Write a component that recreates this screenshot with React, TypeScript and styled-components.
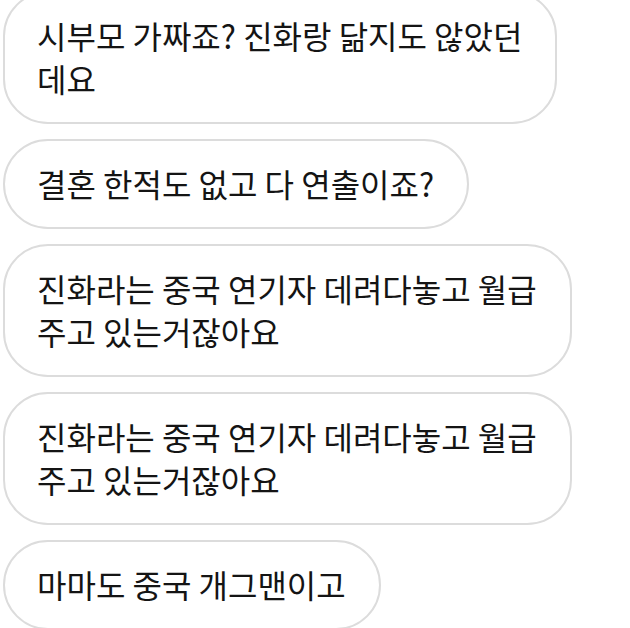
import React from 'react';
import styled, { createGlobalStyle } from 'styled-components';

const GlobalStyle = createGlobalStyle`
    html, body {
        margin: 0;
        padding: 0;
        background: #ffffff;
        overflow: hidden;
    }
`;

const Thread = styled.div`
    display: flex;
    flex-direction: column;
    align-items: flex-start;
    gap: 15px;
    margin-top: -9px;
    padding-left: 3px;
    width: 630px;
    height: 637px;
    overflow: hidden;
`;

const Bubble = styled.div`
    width: fit-content;
    box-sizing: border-box;
    padding: 21px 33px 22px 32px;
    border: 2px solid #dcdcdc;
    border-radius: 45px;
    background: #ffffff;
    color: #141414;
    font-family: 'Noto Sans CJK KR', 'Noto Sans', sans-serif;
    font-size: 32px;
    line-height: 43px;
    white-space: nowrap;
`;

const Line = styled.div`
    display: block;
`;

const messages: string[][] = [
    ['시부모 가짜죠? 진화랑 닮지도 않았던', '데요'],
    ['결혼 한적도 없고 다 연출이죠?'],
    ['진화라는 중국 연기자 데려다놓고 월급', '주고 있는거잖아요'],
    ['진화라는 중국 연기자 데려다놓고 월급', '주고 있는거잖아요'],
    ['마마도 중국 개그맨이고'],
];

export default function App() {
    return (
        <>
            <GlobalStyle />
            <Thread>
                {messages.map((lines, i) => (
                    <Bubble key={i}>
                        {lines.map((line, j) => (
                            <Line key={j}>{line}</Line>
                        ))}
                    </Bubble>
                ))}
            </Thread>
        </>
    );
}
